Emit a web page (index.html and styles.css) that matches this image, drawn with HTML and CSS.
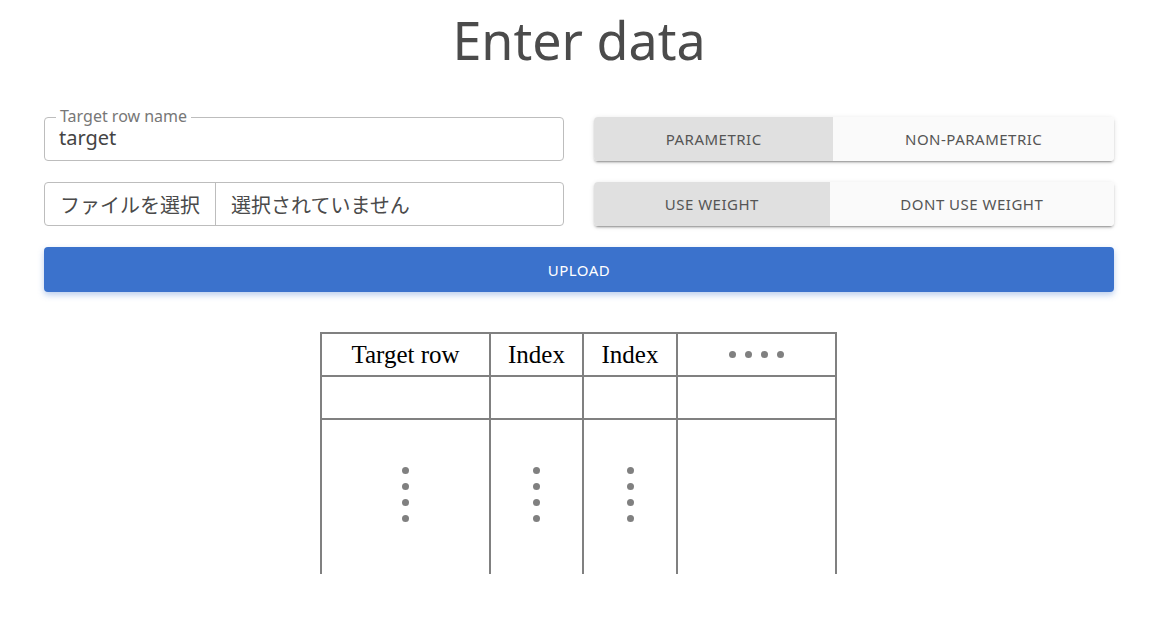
FILE: index.html
```html
<!DOCTYPE html>
<html lang="ja">
<head>
<meta charset="utf-8">
<title>Enter data</title>
<link rel="stylesheet" href="styles.css">
</head>
<body>
<main class="page">
  <h1 class="title">Enter data</h1>
  <section class="form">
    <div class="field">
      <span class="field-label">Target row name</span>
      <span class="field-value">target</span>
    </div>
    <div class="toggle-group">
      <button class="toggle selected">PARAMETRIC</button>
      <button class="toggle">NON-PARAMETRIC</button>
    </div>
    <div class="file-input">
      <span class="file-button">ファイルを選択</span>
      <span class="file-name">選択されていません</span>
    </div>
    <div class="toggle-group">
      <button class="toggle selected">USE WEIGHT</button>
      <button class="toggle">DONT USE WEIGHT</button>
    </div>
    <button class="upload">UPLOAD</button>
  </section>
  <div class="sheet">
    <div class="cell head">Target row</div>
    <div class="cell head">Index</div>
    <div class="cell head">Index</div>
    <div class="cell head"><span class="hdots"><i></i><i></i><i></i><i></i></span></div>
    <div class="cell"></div>
    <div class="cell"></div>
    <div class="cell"></div>
    <div class="cell"></div>
    <div class="cell tall"><span class="vdots"><i></i><i></i><i></i><i></i></span></div>
    <div class="cell tall"><span class="vdots"><i></i><i></i><i></i><i></i></span></div>
    <div class="cell tall"><span class="vdots"><i></i><i></i><i></i><i></i></span></div>
    <div class="cell tall"></div>
  </div>
</main>
</body>
</html>
```
FILE: styles.css
```css
* { box-sizing: border-box; }
html, body { margin: 0; background: #fff; }
body {
  font-family: "Noto Sans", "Noto Sans CJK JP", sans-serif;
  color: #4a4a4a;
}
.page {
  padding: 5px 58px 0 44px;
}
.title {
  margin: 0;
  font-size: 52px;
  line-height: 70px;
  font-weight: 400;
  text-align: center;
  color: #4b4b4b;
}
.form {
  margin-top: 42px;
  display: grid;
  grid-template-columns: 1fr 1fr;
  column-gap: 30px;
  row-gap: 21px;
}
.field {
  position: relative;
  height: 44px;
  border: 1px solid #bdbdbd;
  border-radius: 4px;
  padding: 10px 14px 0;
}
.field-label {
  position: absolute;
  left: 11px;
  top: -10px;
  padding: 0 4px;
  background: #fff;
  font-size: 16px;
  line-height: 16px;
  color: #777;
}
.field-value {
  display: block;
  font-size: 20px;
  line-height: 20px;
  color: #444;
}
.file-input {
  height: 44px;
  border: 1px solid #bdbdbd;
  border-radius: 4px;
  display: flex;
  align-items: stretch;
  font-family: "Noto Sans CJK JP", sans-serif;
  font-size: 20px;
  color: #4a4a4a;
}
.file-button {
  display: flex;
  align-items: center;
  padding: 0 15px;
  border-right: 1px solid #bdbdbd;
}
.file-name {
  display: flex;
  align-items: center;
  padding-left: 15px;
}
.toggle-group {
  display: flex;
  height: 44px;
  border-radius: 4px;
  overflow: hidden;
  box-shadow: 0 3px 1px -2px rgba(0,0,0,0.2), 0 2px 2px 0 rgba(0,0,0,0.14), 0 1px 5px 0 rgba(0,0,0,0.12);
}
.toggle {
  flex: 1 1 auto;
  border: 0;
  margin: 0;
  background: #fafafa;
  font-family: "Noto Sans", sans-serif;
  font-size: 15px;
  letter-spacing: 0.5px;
  color: #555;
  padding: 0 16px;
}
.toggle.selected { background: #e0e0e0; }
.upload {
  grid-column: 1 / -1;
  height: 45px;
  border: 0;
  border-radius: 4px;
  background: #3b72cc;
  color: #fff;
  font-family: "Noto Sans", sans-serif;
  font-size: 15px;
  letter-spacing: 0.5px;
  box-shadow: 0 3px 6px rgba(59,114,204,0.35);
}
.sheet {
  margin: 40px 0 0 276px;
  width: 517px;
  display: grid;
  grid-template-columns: 167px 91px 92px 157px;
  grid-template-rows: 41px 41px 154px;
  gap: 2px;
  padding: 2px 2px 0;
  background: #808080;
}
.cell {
  background: #fff;
  display: flex;
  align-items: center;
  justify-content: center;
}
.head {
  font-family: "Liberation Serif", serif;
  font-size: 25px;
  color: #000;
}
.hdots { display: flex; gap: 9px; }
.vdots { display: flex; flex-direction: column; gap: 9px; margin-bottom: 5px; }
.hdots i, .vdots i {
  display: block;
  width: 7px;
  height: 7px;
  border-radius: 50%;
  background: #808080;
}
```
